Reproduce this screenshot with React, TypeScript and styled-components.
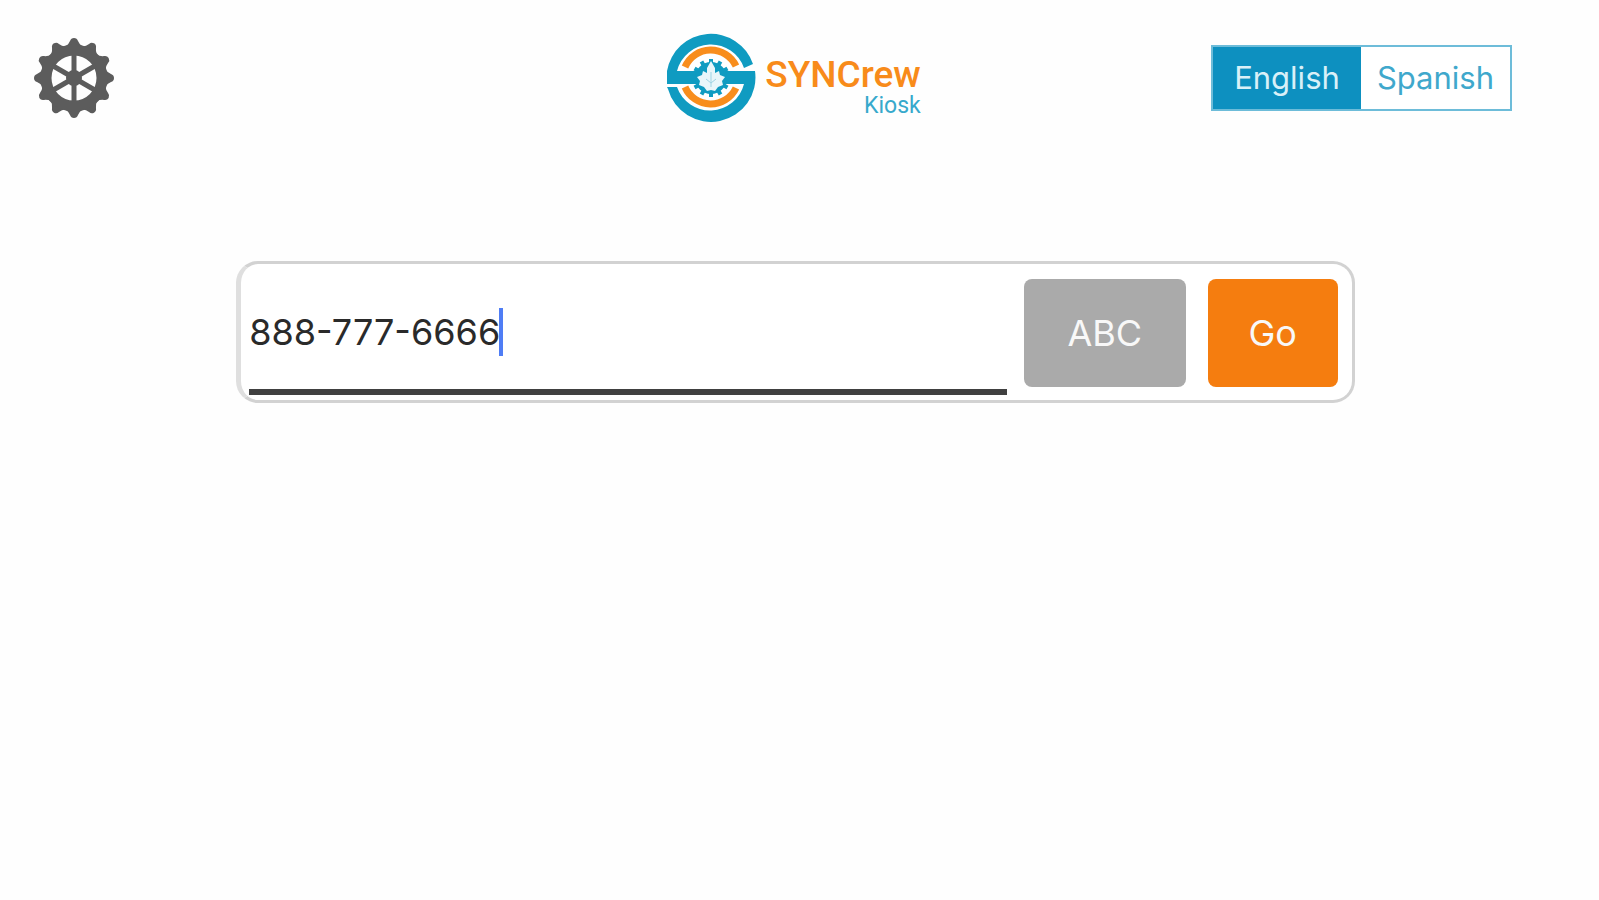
import React, { useState } from "react";
import styled, { createGlobalStyle } from "styled-components";

const BLUE = "#0d90c0";
const TEAL = "#0f9bc1";
const ORANGE = "#f57d0f";

const GlobalStyle = createGlobalStyle`
  *, *::before, *::after { box-sizing: border-box; }
  body {
    margin: 0;
    background: #fefefe;
    color: #2a2a2a;
    font-family: Inter, "Liberation Sans", sans-serif;
  }
  button, input { font: inherit; color: inherit; }
`;

const Header = styled.header`
  display: grid;
  grid-template-columns: 1fr auto 1fr;
  align-items: center;
  padding: 33px 44px 0 32px;
`;

const SettingsButton = styled.button`
  justify-self: start;
  padding: 0;
  border: 0;
  background: none;
  cursor: pointer;
  svg { display: block; }
`;

const Brand = styled.div`
  display: flex;
  align-items: center;
  gap: 9px;
  svg { display: block; }
`;

const BrandText = styled.div`
  display: flex;
  flex-direction: column;
  align-items: flex-end;
  padding-top: 18px;
  font-family: Roboto, "Liberation Sans", sans-serif;
`;

const BrandName = styled.span`
  font-size: 37px;
  line-height: 38px;
  font-weight: 500;
  color: #f88b1a;
`;

const BrandProduct = styled.span`
  font-size: 23px;
  line-height: 24px;
  color: #37a9cc;
`;

const LanguageSwitch = styled.div`
  justify-self: end;
  display: flex;
  margin-right: 43px;
  border: 2px solid #6dbcd9;
`;

const LanguageButton = styled.button<{ $active?: boolean }>`
  width: ${(p) => (p.$active ? 148 : 149)}px;
  height: 62px;
  padding: 0;
  border: 0;
  font-size: 31px;
  line-height: 40px;
  cursor: pointer;
  background: ${(p) => (p.$active ? BLUE : "#fff")};
  color: ${(p) => (p.$active ? "#d9f0f8" : "#3fa8cc")};
`;

const Main = styled.main`
  padding: 138px 8px 0 0;
`;

const EntryForm = styled.form`
  display: flex;
  align-items: stretch;
  width: 70.3%;
  height: 142px;
  margin: 0 auto;
  padding: 0 14px 5px 8px;
  border: 3px solid #d2d2d2;
  border-left: 5px solid #dfdfdf;
  border-radius: 22px;
  background: #fff;
`;

const Field = styled.label`
  display: flex;
  align-items: center;
  flex: 1;
  min-width: 0;
  padding-top: 10px;
  border-bottom: 6px solid #404040;
`;

const NumberInput = styled.input`
  field-sizing: content;
  padding: 0;
  border: 0;
  outline: 0;
  background: none;
  font-size: 36px;
  line-height: 48px;
  caret-color: transparent;
`;

const Caret = styled.span`
  width: 4px;
  height: 48px;
  margin-left: -1px;
  background: #4f7df5;
`;

const Actions = styled.div`
  display: flex;
  gap: 22px;
  padding: 15px 0 2px 17px;
`;

const ActionButton = styled.button<{ $primary?: boolean }>`
  width: ${(p) => (p.$primary ? 130 : 162)}px;
  height: 108px;
  padding: 0;
  border: 0;
  border-radius: 8px;
  font-size: 36px;
  line-height: 48px;
  color: #f8f8f8;
  background: ${(p) => (p.$primary ? ORANGE : "#aaaaaa")};
  cursor: pointer;
`;

const rotations = (count: number) =>
  Array.from({ length: count }, (_, i) => (i * 360) / count);

function GearIcon() {
  return (
    <svg width="84" height="84" viewBox="-42 -42 84 84" aria-hidden="true">
      <g fill="#5c5c5c">
        {rotations(12).map((a) => (
          <path
            key={a}
            transform={`rotate(${a})`}
            d="M-9-31 Q-5-34-4-37 Q-3-40 0-40 Q3-40 4-37 Q5-34 9-31Z"
          />
        ))}
      </g>
      <circle r="28" fill="none" stroke="#5c5c5c" strokeWidth="11" />
      <g stroke="#5c5c5c" strokeWidth="5">
        {rotations(6).map((a) => (
          <path key={a} transform={`rotate(${a})`} d="M0 0V-25" />
        ))}
      </g>
      <circle r="8" fill="#5c5c5c" />
    </svg>
  );
}

function LogoMark() {
  return (
    <svg width="90" height="90" viewBox="-45 -45 90 90" aria-hidden="true">
      <g fill={TEAL}>
        <path d="M-44-7 A44.5 44.5 0 0 1 42-14 L33-10 A35 35 0 0 0-34-7H-14V6H-44Z" />
        <path d="M44-7 A44.5 44.5 0 0 1-43 11 L-44 9H-34 A35 35 0 0 0 33 6H14V-7Z" />
      </g>
      <g fill="none" stroke="#f88d1c" strokeWidth="7">
        <path d="M-26-11 A28 28 0 0 1 25-12" />
        <path d="M-26 9 A28 28 0 0 0 25 10" />
      </g>
      <circle r="16" fill={TEAL} />
      <g fill={TEAL}>
        {rotations(12).map((a) => (
          <rect key={a} x="-2" y="-19" width="4" height="5" transform={`rotate(${a})`} />
        ))}
      </g>
      <path
        fill="#e9f6fa"
        d="M0-17 L4-10 L4-5 L8-7 L9-3 L14-1 L11 3 L12 7 L7 9 L4 13 L0 12 L-4 13 L-7 9 L-12 7 L-11 3 L-14-1 L-9-3 L-8-7 L-4-5 L-4-10Z"
      />
      <path d="M0-6V9M-5 1L0 5L5 1" fill="none" stroke="#9fd4e4" strokeWidth="1" />
    </svg>
  );
}

export default function App() {
  const [value, setValue] = useState("888-777-6666");
  const [language, setLanguage] = useState("English");

  return (
    <>
      <GlobalStyle />
      <Header>
        <SettingsButton type="button" aria-label="Settings">
          <GearIcon />
        </SettingsButton>
        <Brand>
          <LogoMark />
          <BrandText>
            <BrandName>SYNCrew</BrandName>
            <BrandProduct>Kiosk</BrandProduct>
          </BrandText>
        </Brand>
        <LanguageSwitch role="group" aria-label="Language">
          {["English", "Spanish"].map((name) => (
            <LanguageButton
              key={name}
              type="button"
              $active={name === language}
              aria-pressed={name === language}
              onClick={() => setLanguage(name)}
            >
              {name}
            </LanguageButton>
          ))}
        </LanguageSwitch>
      </Header>
      <Main>
        <EntryForm onSubmit={(e) => e.preventDefault()}>
          <Field>
            <NumberInput
              aria-label="Phone number"
              value={value}
              onChange={(e) => setValue(e.target.value)}
            />
            <Caret />
          </Field>
          <Actions>
            <ActionButton type="button">ABC</ActionButton>
            <ActionButton type="submit" $primary>
              Go
            </ActionButton>
          </Actions>
        </EntryForm>
      </Main>
    </>
  );
}
